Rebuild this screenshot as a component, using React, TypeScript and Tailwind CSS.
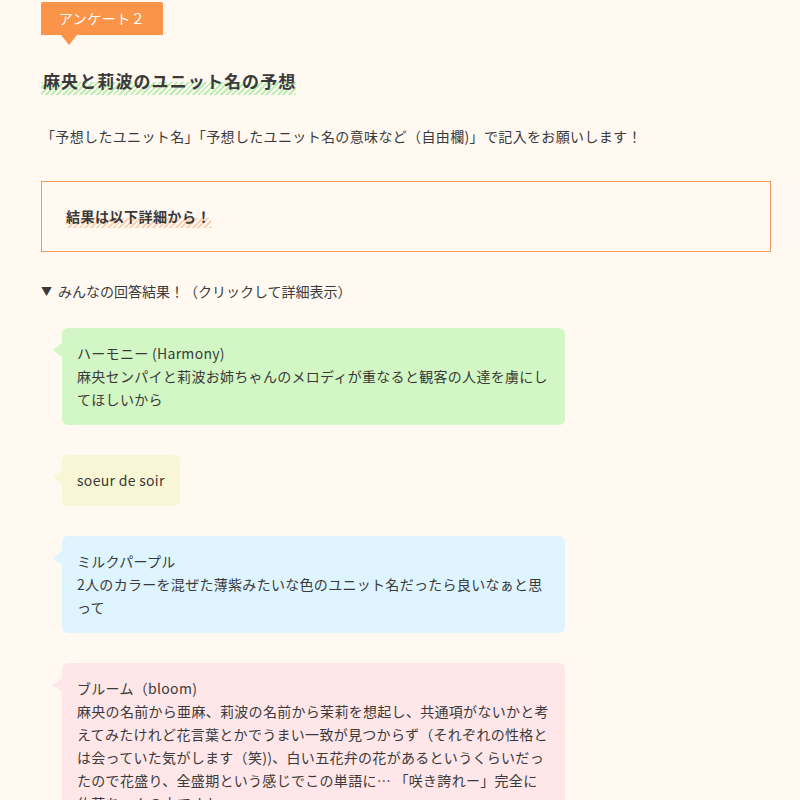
const stripeGreen =
  "bg-[linear-gradient(#fff9f2_50%,transparent_50%),repeating-linear-gradient(-45deg,#bdeeb4_0px,#bdeeb4_2px,transparent_2px,transparent_4px)]";
const stripeOrange =
  "bg-[linear-gradient(#fff9f2_55%,transparent_55%),repeating-linear-gradient(-45deg,#fbd3b4_0px,#fbd3b4_2px,transparent_2px,transparent_4px)]";

type Answer = { color: string; title: string; body?: string };

const answers: Answer[] = [
  {
    color: "bg-[#d2f7c4]",
    title: "ハーモニー (Harmony)",
    body: "麻央センパイと莉波お姉ちゃんのメロディが重なると観客の人達を虜にしてほしいから",
  },
  { color: "bg-[#f8f6d4]", title: "soeur de soir" },
  {
    color: "bg-[#def4fe]",
    title: "ミルクパープル",
    body: "2人のカラーを混ぜた薄紫みたいな色のユニット名だったら良いなぁと思って",
  },
  {
    color: "bg-[#ffe6e8]",
    title: "ブルーム（bloom)",
    body: "麻央の名前から亜麻、莉波の名前から茉莉を想起し、共通項がないかと考えてみたけれど花言葉とかでうまい一致が見つからず（それぞれの性格とは会っていた気がします（笑))、白い五花弁の花があるというくらいだったので花盛り、全盛期という感じでこの単語に… 「咲き誇れー」完全に佑芽ちゃんの方ですね…",
  },
];

const tail: Record<string, string> = {
  "bg-[#d2f7c4]": "border-r-[#d2f7c4]",
  "bg-[#f8f6d4]": "border-r-[#f8f6d4]",
  "bg-[#def4fe]": "border-r-[#def4fe]",
  "bg-[#ffe6e8]": "border-r-[#ffe6e8]",
};

function Bubble({ a }: { a: Answer }) {
  return (
    <div className="flex items-start">
      <div
        className={`mt-[15px] h-0 w-0 border-y-[7px] border-r-[9px] border-y-transparent ${tail[a.color]}`}
      />
      <div
        className={`max-w-[503px] rounded-[6px] px-[15px] py-[14px] text-[14px] leading-[23px] tracking-[0.3px] ${a.color}`}
      >
        <div>{a.title}</div>
        {a.body && <div>{a.body}</div>}
      </div>
    </div>
  );
}

export default function App() {
  return (
    <div
      className="min-h-screen bg-[#fff9f2] text-[#3a3a3a]"
      style={{ fontFamily: '"Noto Sans CJK JP", "Noto Sans", sans-serif' }}
    >
      <div className="pl-[41px] pr-[29px] pt-[2px]">
        <div className="flex h-[33px] w-[122px] items-center justify-center rounded-t-[2px] bg-[#fa9449] text-[14px] tracking-[0.5px] text-white">
          アンケート２
        </div>
        <div className="ml-[20px] h-0 w-0 border-x-[8px] border-t-[10px] border-x-transparent border-t-[#fa9449]" />

        <h2 className="mt-[23px] text-[17px] font-bold tracking-[1.1px]">
          <span className={`inline-block pb-[2px] pl-[2px] leading-[24px] ${stripeGreen}`}>
            麻央と莉波のユニット名の予想
          </span>
        </h2>

        <p className="mt-[29px] text-[14px] leading-[24px] tracking-[0.35px]">
          「予想したユニット名」「予想したユニット名の意味など（自由欄)」で記入をお願いします！
        </p>

        <div className="mt-[33px] flex h-[71px] items-center border border-[#ee9c62] pl-[24px]">
          <span className={`inline-block pb-[1px] text-[14px] font-bold leading-[22px] tracking-[0.5px] ${stripeOrange}`}>
            結果は以下詳細から！
          </span>
        </div>

        <div className="mt-[27px] flex items-center gap-[6px] text-[14px] leading-[24px]">
          <span className="text-[11px]">▼</span>
          <span>みんなの回答結果！（クリックして詳細表示）</span>
        </div>

        <div className="mt-[25px] flex flex-col items-start gap-[30px] pl-[12px]">
          {answers.map((a) => (
            <Bubble key={a.title} a={a} />
          ))}
        </div>
      </div>
    </div>
  );
}
